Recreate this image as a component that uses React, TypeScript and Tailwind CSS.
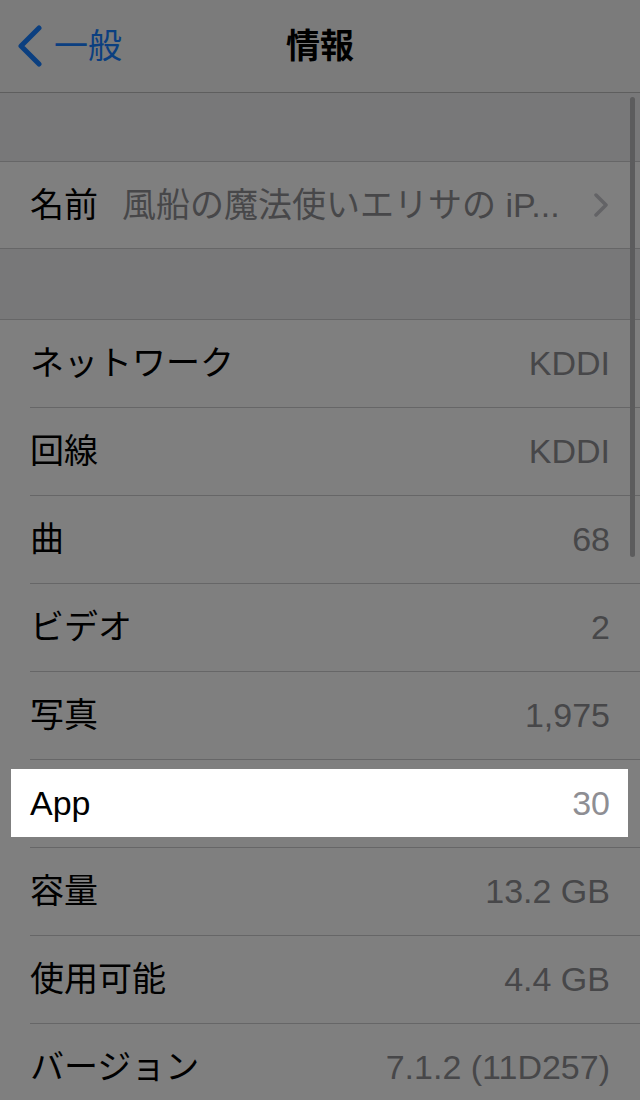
const font = { fontFamily: '"Liberation Sans", "Noto Sans CJK JP", sans-serif' };

type Item = { label: string; value: string; highlight?: boolean };

const items: Item[] = [
  { label: 'ネットワーク', value: 'KDDI' },
  { label: '回線', value: 'KDDI' },
  { label: '曲', value: '68' },
  { label: 'ビデオ', value: '2' },
  { label: '写真', value: '1,975' },
  { label: 'App', value: '30', highlight: true },
  { label: '容量', value: '13.2 GB' },
  { label: '使用可能', value: '4.4 GB' },
  { label: 'バージョン', value: '7.1.2 (11D257)' },
];

function Row({ item }: { item: Item }) {
  if (item.highlight) {
    return (
      <div className="h-[87px] bg-[#7f7f7f] pt-[9px] pb-[10px] pl-[11px] pr-[12px]">
        <div className="h-full bg-white flex items-center justify-between pl-[19px] pr-[18px]">
          <span className="text-[34px] text-black">{item.label}</span>
          <span className="text-[34px] text-[#8e8e93]">{item.value}</span>
        </div>
      </div>
    );
  }
  return (
    <div className="h-[87px] bg-[#7f7f7f] flex items-center justify-between pl-[30px] pr-[30px]">
      <span className="text-[34px] text-black">{item.label}</span>
      <span className="text-[34px] text-[#474749]">{item.value}</span>
    </div>
  );
}

export default function App() {
  return (
    <div className="relative w-[640px] h-[1100px] overflow-hidden bg-[#787879]" style={font}>
      {/* nav bar */}
      <div className="h-[93px] bg-[#7b7b7b] border-b border-[#5e5e5e] flex items-center relative">
        <div className="flex items-center pl-[16px] gap-[12px] text-[#0b3f80]">
          <svg width="26" height="42" viewBox="0 0 26 42">
            <path d="M23 3 L5 21 L23 39" fill="none" stroke="#0b3f80" strokeWidth="5" strokeLinecap="round" strokeLinejoin="round" />
          </svg>
          <span className="text-[34px]">一般</span>
        </div>
        <div className="absolute inset-0 flex items-center justify-center pointer-events-none">
          <span className="text-[34px] font-semibold text-black">情報</span>
        </div>
      </div>

      <div className="h-[69px] border-b border-[#666667]" />

      <div className="h-[87px] bg-[#7f7f7f] border-b border-[#666667] flex items-center pl-[30px] pr-[32px]">
        <span className="text-[34px] text-black mr-[24px]">名前</span>
        <span className="flex-1 text-[34px] text-[#474749] truncate">風船の魔法使いエリサの iP...</span>
        <svg width="14" height="24" viewBox="0 0 14 24" className="ml-[20px]">
          <path d="M2 2 L12 12 L2 22" fill="none" stroke="#636366" strokeWidth="3.5" strokeLinecap="round" strokeLinejoin="round" />
        </svg>
      </div>

      <div className="h-[71px] border-b border-[#666667]" />

      <div className="bg-[#7f7f7f]">
        {items.map((item) => (
          <div key={item.label} className="flex flex-col">
            <Row item={item} />
            <div className="h-px ml-[30px] bg-[#666667]" />
          </div>
        ))}
      </div>

      {/* scroll indicator */}
      <div className="absolute left-[630px] top-[97px] w-[5px] h-[460px] rounded-full bg-[#5c5c5d]" />
    </div>
  );
}
